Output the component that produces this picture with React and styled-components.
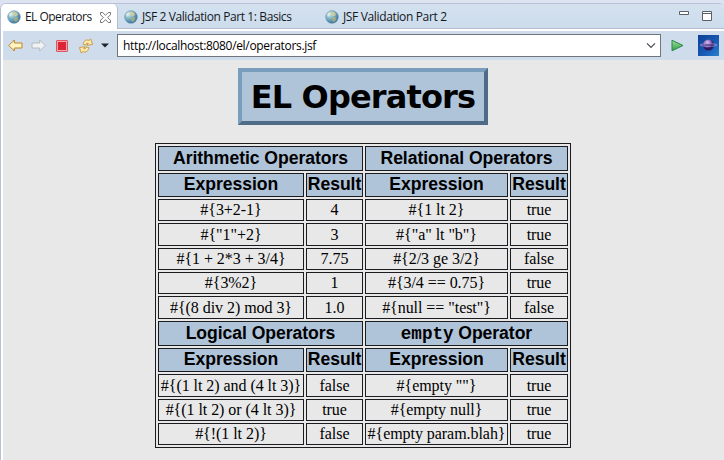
import React from "react";
import styled, { createGlobalStyle, css } from "styled-components";

const GlobalStyle = createGlobalStyle`
  * { box-sizing: border-box; }
  html, body { margin: 0; padding: 0; overflow: hidden; }
`;

const Window = styled.div`
  width: 724px;
  height: 460px;
  background: #dee3f2;
  padding: 3px 0 0 0;
  display: flex;
  flex-direction: column;
  font-family: "Open Sans", "Noto Sans", sans-serif;
`;

const Pane = styled.div`
  flex: 1;
  border-left: 1px solid #b9bfd2;
  border-top: 1px solid #b9c2d6;
  border-top-left-radius: 6px;
  border-top-right-radius: 5px;
  overflow: hidden;
  background: #fff;
  display: flex;
  flex-direction: column;
`;

const TabBar = styled.div`
  height: 25px;
  display: flex;
  flex: none;
  background: linear-gradient(#d3e1ef, #cddcec);
  border-bottom: 1px solid #b4bdcc;
`;

const Tab = styled.div`
  display: flex;
  align-items: center;
  height: 25px;
  flex: none;
  width: ${(p) => p.$width}px;
  padding-left: 6px;
  padding-top: 1px;
  font-size: 12px;
  white-space: nowrap;
  color: #14181c;
  ${(p) =>
    p.$active &&
    css`
      background: #fff;
      border-right: 1px solid #b4bdcc;
      border-top-right-radius: 5px;
    `}
`;

const TabLabel = styled.span`
  margin-left: 4px;
  line-height: 16px;
  letter-spacing: ${(p) => p.$spacing}px;
`;

const CloseSlot = styled.span`
  display: flex;
  margin-left: auto;
  margin-right: 6px;
`;

const WindowButtons = styled.div`
  margin-left: auto;
  margin-right: 12px;
  padding-top: 6px;
  display: flex;
  gap: 13px;
`;

const Toolbar = styled.div`
  height: 29px;
  margin: 2px 0 0 2px;
  background: #cfdcec;
  display: flex;
  align-items: center;
  flex: none;
`;

const Tools = styled.div`
  width: 114px;
  display: flex;
  align-items: center;
  padding-left: 5px;
`;

const ToolIcon = styled.span`
  display: flex;
  margin-right: ${(p) => p.$gap || 0}px;
`;

const GoSlot = styled.span`
  display: flex;
  margin: 0 14px 0 10px;
`;

const Address = styled.div`
  width: 544px;
  height: 23px;
  border: 1px solid #70757d;
  background: #fff;
  display: flex;
  align-items: center;
  justify-content: space-between;
  padding: 0 4px 0 5px;
  font-size: 12px;
  color: #000;
`;

const Url = styled.span`
  line-height: 16px;
  letter-spacing: -0.33px;
`;

const Page = styled.main`
  flex: 1;
  margin-left: 2px;
  background: #e8e8e8;
  display: flex;
  flex-direction: column;
  align-items: flex-start;
`;

const Title = styled.h1`
  margin: 8px 0 0 235px;
  width: 250px;
  height: 57px;
  border: 4px solid;
  border-color: #789dbd #4e6b88 #4e6b88 #789dbd;
  background: #b0c4d9;
  color: #000;
  font: bold 32px/50px "DejaVu Sans", sans-serif;
  letter-spacing: -0.85px;
  text-align: center;
  white-space: nowrap;
`;

const Table = styled.table`
  margin: 18px 0 0 152px;
  width: 416px;
  table-layout: fixed;
  border: 1px solid #1c1c20;
  border-collapse: separate;
  border-spacing: 2px;
  color: #000;
  font: 16px/18px "Liberation Serif", serif;
  letter-spacing: -0.05px;
  text-align: center;
  white-space: nowrap;
`;

const Col = styled.col`
  width: ${(p) => p.$width}px;
`;

const Row = styled.tr`
  height: ${(p) => p.$height}px;
`;

const Heading = styled.th`
  padding: 0 0 2px;
  border: 1px solid #1c1c20;
  background: #b0c4d9;
  font: bold 17.6px/20px "Liberation Sans", sans-serif;
`;

const Cell = styled.td`
  padding: 0;
  border: 1px solid #1c1c20;
`;

const Code = styled.code`
  font-family: "Liberation Mono", monospace;
  font-size: 17.6px;
  line-height: 16px;
`;

function Globe() {
  return (
    <svg width="14" height="14" viewBox="0 0 14 14">
      <defs>
        <radialGradient id="sea" cx=".3" cy=".25" r=".85">
          <stop offset="0" stopColor="#dcebe9" />
          <stop offset=".45" stopColor="#7db3c6" />
          <stop offset="1" stopColor="#2a6699" />
        </radialGradient>
      </defs>
      <circle cx="7" cy="7" r="6.300" fill="url(#sea)" stroke="#6590a8" strokeWidth=".6" />
      <path d="M6 1.500 9 2l2 2-1 2-2 .5L7 5 5.500 4z" fill="#d8cf92" opacity=".8" />
      <path d="M7 7.500 10.500 7l1 2-2 3-2-.5z" fill="#b9b573" opacity=".7" />
      <path d="m2 4 2-1 1 2-2 2z" fill="#eef5ee" opacity=".6" />
    </svg>
  );
}

function CloseIcon() {
  return (
    <svg width="11" height="11" viewBox="0 0 11 11">
      <path
        d="M.5.5h2.200L5.500 3.300 8.300.5h2.200v2.200L7.700 5.500l2.800 2.800v2.200H8.300L5.500 7.700 2.700 10.500H.5V8.300L3.300 5.500.5 2.700z"
        fill="#fff"
        stroke="#65656a"
        strokeWidth=".9"
      />
    </svg>
  );
}

function Arrow({ forward }) {
  return (
    <svg width="15" height="13" viewBox="0 0 15 13">
      <path
        d="M.8 6.500 6.300 1v3H14v5H6.300v3z"
        transform={forward ? "translate(15 0) scale(-1 1)" : undefined}
        fill={forward ? "#f1f2f3" : "#fff4c4"}
        stroke={forward ? "#b6babf" : "#bd8423"}
        strokeLinejoin="round"
      />
    </svg>
  );
}

function StopIcon() {
  return (
    <svg width="12" height="12" viewBox="0 0 12 12">
      <rect x=".5" y=".5" width="11" height="11" rx=".5" fill="#f4a8ae" stroke="#de5663" />
      <rect x="2" y="2" width="8" height="8" fill="#dc2636" />
    </svg>
  );
}

function RefreshIcon() {
  const half = "M5.300 6.500C5.300 3 8 1.200 11 2.400L12.800 1 14.500 6.500 9 7.300l1.300-2C8.800 4.700 8 5.500 8 7z";
  return (
    <svg width="16" height="16" viewBox="0 0 16 16">
      <g fill="#fdeab0" stroke="#c8953a" strokeWidth=".9" strokeLinejoin="round">
        <path d={half} />
        <path d={half} transform="rotate(180 8 8)" />
      </g>
    </svg>
  );
}

function MenuCaret() {
  return (
    <svg width="8" height="5" viewBox="0 0 8 5">
      <path d="M0 .5h8L4 4.500z" fill="#20252d" />
    </svg>
  );
}

function Chevron() {
  return (
    <svg width="10" height="7" viewBox="0 0 10 7">
      <path d="m1 1.300 4 4 4-4" fill="none" stroke="#44484e" strokeWidth="1.200" />
    </svg>
  );
}

function GoIcon() {
  return (
    <svg width="13" height="13" viewBox="0 0 13 13">
      <defs>
        <linearGradient id="go" x2="0" y2="1">
          <stop offset="0" stopColor="#a2d99b" />
          <stop offset="1" stopColor="#2da34a" />
        </linearGradient>
      </defs>
      <path d="M1 1.200 12 6.500 1 11.800z" fill="url(#go)" stroke="#27864b" strokeLinejoin="round" />
    </svg>
  );
}

function EclipseIcon() {
  return (
    <svg width="21" height="21" viewBox="0 0 21 21">
      <defs>
        <linearGradient id="sky" x2="1" y2="1">
          <stop offset="0" stopColor="#0e3f94" />
          <stop offset=".55" stopColor="#1757b3" />
          <stop offset="1" stopColor="#2583d0" />
        </linearGradient>
        <radialGradient id="planet" cx=".4" cy=".3">
          <stop offset="0" stopColor="#dccdf0" />
          <stop offset=".6" stopColor="#8d6cbd" />
          <stop offset="1" stopColor="#2b1860" />
        </radialGradient>
      </defs>
      <path d="M0 0h21v21H0z" fill="url(#sky)" />
      <circle cx="10.500" cy="10" r="5.500" fill="url(#planet)" />
      <path d="M7 10h7" stroke="#281653" strokeWidth="1.200" />
      <ellipse cx="10.500" cy="10" rx="8.500" ry="1.300" fill="none" stroke="#aa8fd9" strokeWidth=".8" />
    </svg>
  );
}

function MinimizeIcon() {
  return (
    <svg width="10" height="11" viewBox="0 0 10 11">
      <path d="M.5 1.500h9v3h-9z" fill="#fff" stroke="#5d6066" />
    </svg>
  );
}

function MaximizeIcon() {
  return (
    <svg width="10" height="11" viewBox="0 0 10 11">
      <path d="M.5 1.500h9v9h-9zM.5 3.500h9" fill="#fff" stroke="#5d6066" />
    </svg>
  );
}

const sections = [
  {
    titles: ["Arithmetic Operators", "Relational Operators"],
    rows: [
      [22, "#{3+2-1}", "4", "#{1 lt 2}", "true"],
      [23, '#{"1"+2}', "3", '#{"a" lt "b"}', "true"],
      [22, "#{1 + 2*3 + 3/4}", "7.75", "#{2/3 ge 3/2}", "false"],
      [22, "#{3%2}", "1", "#{3/4 == 0.75}", "true"],
      [23, "#{(8 div 2) mod 3}", "1.0", '#{null == "test"}', "false"],
    ],
  },
  {
    titles: ["Logical Operators", <><Code>empty</Code> Operator</>],
    rows: [
      [23, "#{(1 lt 2) and (4 lt 3)}", "false", '#{empty ""}', "true"],
      [22, "#{(1 lt 2) or (4 lt 3)}", "true", "#{empty null}", "true"],
      [22, "#{!(1 lt 2)}", "false", "#{empty param.blah}", "true"],
    ],
  },
];

function OperatorSection({ titles, rows }) {
  return (
    <tbody>
      <Row $height={25}>
        {titles.map((title, i) => (
          <Heading key={i} colSpan={2}>{title}</Heading>
        ))}
      </Row>
      <Row $height={24}>
        {["Expression", "Result", "Expression", "Result"].map((label, i) => (
          <Heading key={i}>{label}</Heading>
        ))}
      </Row>
      {rows.map(([height, ...cells]) => (
        <Row key={cells[0]} $height={height}>
          {cells.map((text, i) => <Cell key={i}>{text}</Cell>)}
        </Row>
      ))}
    </tbody>
  );
}

export default function App() {
  return (
    <>
      <GlobalStyle />
      <Window>
        <Pane>
          <TabBar>
            <Tab $active $width={117}>
              <Globe />
              <TabLabel $spacing={-0.55}>EL Operators</TabLabel>
              <CloseSlot><CloseIcon /></CloseSlot>
            </Tab>
            <Tab $width={201}>
              <Globe />
              <TabLabel $spacing={-0.4}>JSF 2 Validation Part 1: Basics</TabLabel>
            </Tab>
            <Tab $width={140}>
              <Globe />
              <TabLabel $spacing={-0.35}>JSF Validation Part 2</TabLabel>
            </Tab>
            <WindowButtons>
              <MinimizeIcon />
              <MaximizeIcon />
            </WindowButtons>
          </TabBar>
          <Toolbar>
            <Tools>
              <ToolIcon $gap={8}><Arrow /></ToolIcon>
              <ToolIcon $gap={10}><Arrow forward /></ToolIcon>
              <ToolIcon $gap={10}><StopIcon /></ToolIcon>
              <ToolIcon $gap={7}><RefreshIcon /></ToolIcon>
              <MenuCaret />
            </Tools>
            <Address>
              <Url>http://localhost:8080/el/operators.jsf</Url>
              <Chevron />
            </Address>
            <GoSlot><GoIcon /></GoSlot>
            <EclipseIcon />
          </Toolbar>
          <Page>
            <Title>EL Operators</Title>
            <Table>
              <colgroup>
                <Col $width={146} />
                <Col $width={57} />
                <Col $width={143} />
                <Col $width={58} />
              </colgroup>
              {sections.map((section, i) => (
                <OperatorSection key={i} {...section} />
              ))}
            </Table>
          </Page>
        </Pane>
      </Window>
    </>
  );
}
